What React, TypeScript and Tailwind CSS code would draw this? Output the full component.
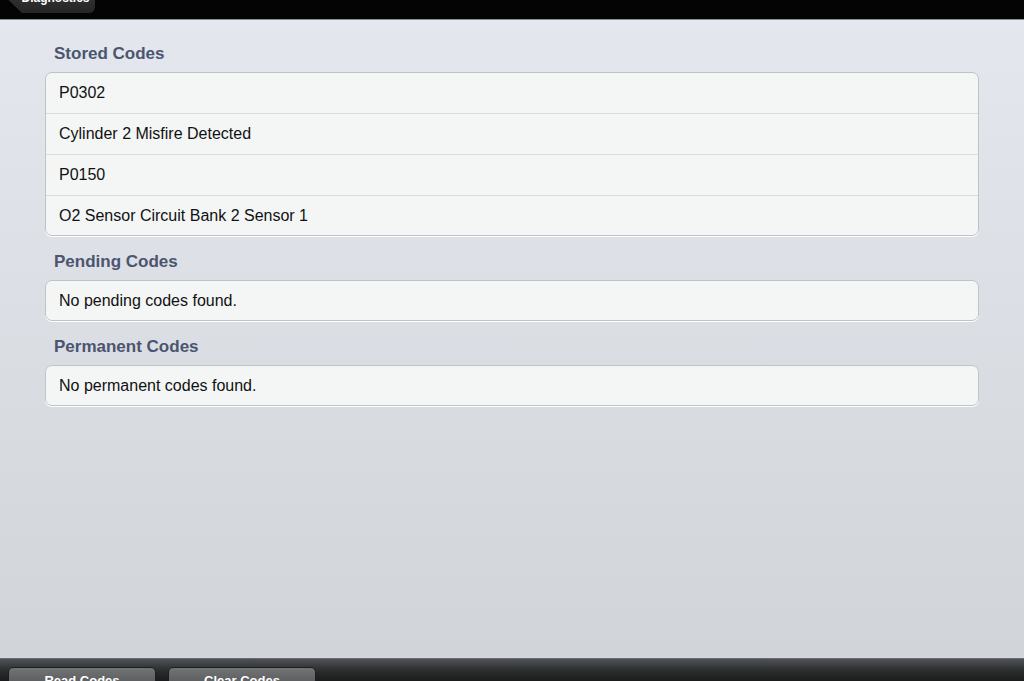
import type { FC } from 'react';

type SectionProps = {
    title: string;
    rows: string[];
}

const font = { fontFamily: '"Liberation Sans", Arial, sans-serif' };

const TopBar: FC = () => (
    <header className="h-[20px] shrink-0 overflow-hidden bg-[#040404] border-b border-[#8a8d92]">
        <div className="ml-[8px] mt-[-17px] w-[87px] h-[30px] flex">
            <div className="w-full h-full bg-gradient-to-b from-[#3a3a3a] to-[#262626] rounded-r-[6px] [clip-path:polygon(12px_0,100%_0,100%_100%,14px_100%,0_55%)] flex items-center justify-center pl-[8px]">
                <span className="text-white text-[12px] font-bold leading-none">Diagnostics</span>
            </div>
        </div>
    </header>
)

const Section: FC<SectionProps> = ({ title, rows }) => (
    <section className="flex flex-col">
        <h2 className="h-[18px] pl-[9px] mb-[9px] text-[17px] leading-[18px] font-bold text-[#4b5570]">{title}</h2>
        <ul className="bg-[#f4f6f6] border border-[#bfc3c8] rounded-[7px] shadow-[0_1px_0_#ffffff]">
            {rows.map((row, index) => (
                <li
                    key={index}
                    className={`flex items-center pl-[13px] text-[16px] text-[#111111] ${index < rows.length - 1 ? 'border-b border-[#dadddf] h-[41px]' : 'h-[39px]'}`}
                >
                    {row}
                </li>
            ))}
        </ul>
    </section>
)

const BarButton: FC<{ label: string }> = ({ label }) => (
    <button className="w-[148px] h-[30px] rounded-[5px] border border-[#1e1f20] bg-gradient-to-b from-[#727375] to-[#4a4b4d] text-white text-[13px] font-bold flex justify-center pt-[6px] leading-none">
        {label}
    </button>
)

const BottomBar: FC = () => (
    <footer className="h-[23px] shrink-0 overflow-hidden border-t border-[#6a6d70] bg-gradient-to-b from-[#505356] via-[#2c2e30] to-[#1a1c1c] flex gap-[12px] pl-[8px] pt-[8px]">
        <BarButton label="Read Codes" />
        <BarButton label="Clear Codes" />
    </footer>
)

export default function App() {
    return (
        <div className="w-[1024px] h-[681px] flex flex-col overflow-hidden" style={font}>
            <TopBar />
            <main className="flex-1 bg-gradient-to-b from-[#e4e7ed] to-[#d1d5da] px-[45px] pt-[25px] flex flex-col gap-[17px]">
                <Section title="Stored Codes" rows={['P0302', 'Cylinder 2 Misfire Detected', 'P0150', 'O2 Sensor Circuit Bank 2 Sensor 1']} />
                <Section title="Pending Codes" rows={['No pending codes found.']} />
                <Section title="Permanent Codes" rows={['No permanent codes found.']} />
            </main>
            <BottomBar />
        </div>
    );
}
